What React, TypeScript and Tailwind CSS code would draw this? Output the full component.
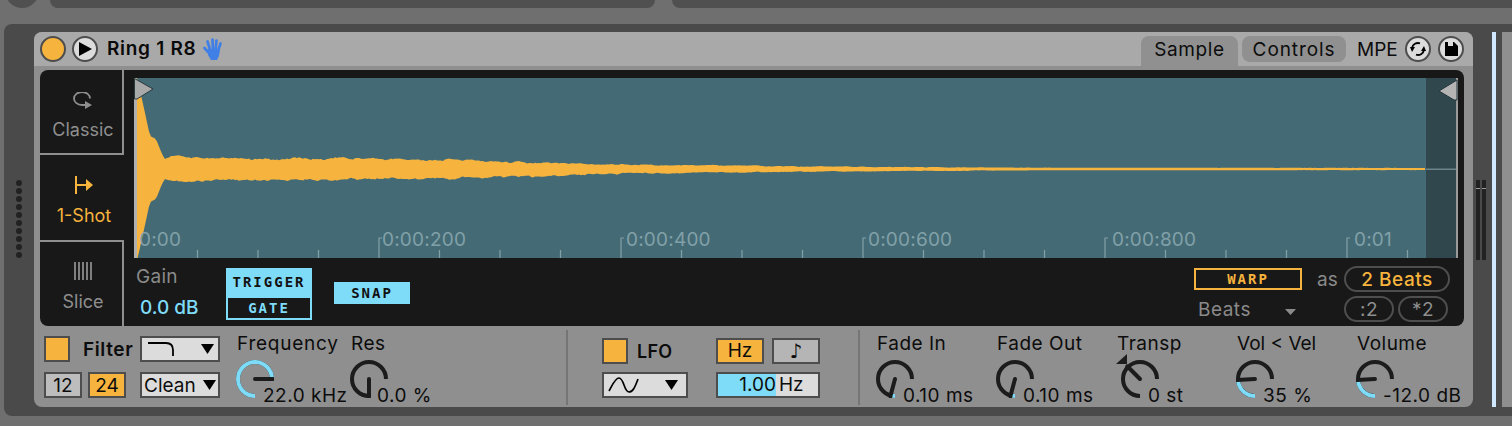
import type { ReactNode } from "react"

const FONT = "font-['Inter','Liberation_Sans',sans-serif]"
const PIXEL = "font-['DejaVu_Sans_Mono','Liberation_Mono',monospace]"

// waveform outline, seeded so it comes out the same every render
function noise(i: number) {
    const s = Math.sin(i * 12.9898) * 43758.5453
    return s - Math.floor(s)
}

// slow lumps plus a bit of fine grain, like the edge of a real decay
function lumps(x: number, seed: number) {
    const step = 7
    const k = Math.floor(x / step)
    const t = (x - k * step) / step
    const slow = noise(k + seed) * (1 - t) + noise(k + 1 + seed) * t
    return (slow - 0.5) * 1.6 + (noise(x + seed) - 0.5) * 0.7
}

function envelope(x: number) {
    const pts = [
        [3, 92], [7, 74], [11, 56], [16, 33], [22, 30], [28, 15], [31, 10], [36, 13],
        [60, 11], [120, 10.5], [300, 9.5], [400, 7], [470, 4.8], [560, 3.8], [670, 2.6], [760, 2], [900, 1.3], [1292, 1.1],
    ]
    for (let i = 0; i < pts.length - 1; i++) {
        if (x <= pts[i + 1][0]) {
            const t = (x - pts[i][0]) / (pts[i + 1][0] - pts[i][0])
            return pts[i][1] + (pts[i + 1][1] - pts[i][1]) * t
        }
    }
    return 1
}

function wavePath() {
    const top: string[] = []
    const bottom: string[] = []
    for (let x = 3; x <= 1292; x += 2) {
        const a = envelope(x)
        const n = x > 30 ? Math.min(1.8, a * 0.22) * (a > 1.5 ? 1 : 0.3) : 0
        const up = Math.min(91, a + lumps(x, 7) * n)
        const down = Math.min(91, a + lumps(x, 311) * n)
        top.push(`${x},${(91 - up).toFixed(1)}`)
        bottom.unshift(`${x},${(91 + down).toFixed(1)}`)
    }
    return `M${top.join(" L")} L${bottom.join(" L")} Z`
}

const WAVE = wavePath()
const TICKS = Array.from({ length: 22 }, (_, i) => i)
const LABELS = [
    { text: "0:00", className: "left-[5px]" },
    { text: "0:00:200", className: "left-[248px]" },
    { text: "0:00:400", className: "left-[492px]" },
    { text: "0:00:600", className: "left-[734px]" },
    { text: "0:00:800", className: "left-[978px]" },
    { text: "0:01", className: "left-[1220px]" },
]

function Waveform() {
    return (
        <div className="relative w-[1324px] h-[180px] bg-[#446b75] overflow-hidden">
            <svg width="1324" height="180" viewBox="0 0 1324 180" className="block">
                <rect x="1292" y="0" width="30" height="180" fill="#30474e" />
                <rect x="0" y="0" width="3" height="180" fill="#b0b0b0" />
                <rect x="1322" y="0" width="2" height="180" fill="#9a9a9a" />
                <path d={WAVE} fill="#f6b33d" />
                <rect x="1292" y="90.5" width="30" height="1.5" fill="#6f8489" />
                {TICKS.map((i) => {
                    const x = 3 + i * 60.5
                    const major = i % 4 === 0
                    if (i === 0) return null
                    return (
                        <path
                            key={i}
                            d={major ? `M${x + 3} 160 H${x} V180` : `M${x} 172 V180`}
                            fill="none"
                            stroke="#83a0a7"
                            strokeWidth="1.2"
                        />
                    )
                })}
                <polygon points="0.5,0.5 19,11 3,21 0.5,21" fill="#a9a9a9" stroke="#2b3a3f" strokeWidth="1" />
                <polygon points="1323,2 1305,13 1320,22 1323,22" fill="#b4b4b4" stroke="#22343a" strokeWidth="1" />
            </svg>
            {LABELS.map((l) => (
                <span key={l.text} className={`absolute top-[152px] text-[19px] leading-5 tracking-[0.2px] text-[#82a0a8] ${l.className}`}>
                    {l.text}
                </span>
            ))}
        </div>
    )
}

function ModeTab({ icon, label, active, className, labelClass }: { icon: ReactNode; label: string; active?: boolean; className: string; labelClass: string }) {
    return (
        <div className={`flex flex-col items-center pl-1 ${active ? "text-[#f6b33d]" : "text-[#8f8f8f]"} ${className}`}>
            {icon}
            <span className={`text-[18px] leading-5 ${labelClass}`}>{label}</span>
        </div>
    )
}

function Pill({ children, className }: { children: ReactNode; className: string }) {
    return (
        <div className={`h-[26px] rounded-[13px] border-2 border-[#4e4e4e] flex items-center justify-center text-[19px] tracking-[0.5px] pt-[2px] ${className}`}>
            {children}
        </div>
    )
}

function Toggle({ className = "" }: { className?: string }) {
    return <div className={`w-[26px] h-[26px] bg-[#f6b33d] border-2 border-[#4d4d4d] ${className}`} />
}

function Arrow() {
    return <svg width="13" height="10" viewBox="0 0 13 10" className="shrink-0"><polygon points="0,0 13,0 6.5,10" fill="#000" /></svg>
}

function polar(r: number, deg: number) {
    // 0 = straight down, going clockwise round the dial
    const a = ((deg + 90) * Math.PI) / 180
    return { x: 19 + r * Math.cos(a), y: 19 + r * Math.sin(a) }
}

function arc(from: number, to: number) {
    const a = polar(17, from)
    const b = polar(17, to)
    const large = to - from > 180 ? 1 : 0
    return `M${a.x.toFixed(2)} ${a.y.toFixed(2)} A17 17 0 ${large} 1 ${b.x.toFixed(2)} ${b.y.toFixed(2)}`
}

function Knob({ angle, cyan }: { angle: number; cyan?: boolean }) {
    const tip = polar(18, angle)
    const start = polar(0, angle)
    return (
        <svg width="38" height="38" viewBox="0 0 38 38" className="shrink-0 block">
            <path d={arc(0, 270)} fill="none" stroke="#1c1c1c" strokeWidth="4" />
            {cyan && angle > 0 && <path d={arc(0, angle)} fill="none" stroke="#7fdcf8" strokeWidth="4" />}
            <line x1={start.x} y1={start.y} x2={tip.x} y2={tip.y} stroke="#1c1c1c" strokeWidth="4" strokeLinecap="round" />
        </svg>
    )
}

function Param({ label, value, angle, cyan, className = "", knobClass = "", labelClass = "tracking-[0.5px]", marker }: {
    label: string; value: string; angle: number; cyan?: boolean; className?: string; knobClass?: string; labelClass?: string; marker?: boolean
}) {
    return (
        <div className={`relative shrink-0 ${className}`}>
            <div className={`pl-[1px] h-[20px] mt-[8px] text-[19px] leading-5 text-[#0c0c0c] whitespace-nowrap ${labelClass}`}>{label}</div>
            {marker && (
                <svg width="12" height="10" viewBox="0 0 12 10" className="absolute left-0 top-[28px]"><polygon points="0,10 11,0 11,10" fill="#1c1c1c" /></svg>
            )}
            <div className={`flex mt-[6px] ${knobClass}`}>
                <Knob angle={angle} cyan={cyan} />
                <span className="-ml-[11px] mt-[26px] text-[19px] leading-5 text-[#0c0c0c] whitespace-nowrap tracking-[0.5px]">{value}</span>
            </div>
        </div>
    )
}

function RoundIcon({ children }: { children: ReactNode }) {
    return (
        <div className="w-[26px] h-[26px] rounded-full border-2 border-[#4d4d4d] bg-[#dcdcdc] flex items-center justify-center">
            {children}
        </div>
    )
}

export default function App() {
    return (
        <div className={`w-[1512px] h-[426px] overflow-hidden bg-[#6f6f6f] flex flex-col ${FONT}`}>
            {/* neighbouring panels, cut off by the top edge */}
            <div className="h-2 flex shrink-0 overflow-hidden">
                <div className="w-[50px] flex">
                    <div className="ml-[5px] w-[34px] h-[34px] -mt-[26px] rounded-full bg-[#505050]" />
                </div>
                <div className="w-[605px] bg-[#505050] rounded-b-lg" />
                <div className="ml-[17px] flex-1 bg-[#505050] rounded-bl-lg" />
            </div>

            <div className="mt-4 h-[392px] ml-1 flex bg-[#4a4a4a] rounded-l-lg pt-2 pb-[9px]">
                {/* grip */}
                <div className="w-[30px] shrink-0 flex flex-col items-center justify-center gap-[2px] pb-[2px]">
                    {Array.from({ length: 10 }, (_, i) => (
                        <div key={i} className="w-[6px] h-[6px] rounded-full bg-[#222222]" />
                    ))}
                </div>

                {/* device */}
                <div className="w-[1439px] shrink-0 flex flex-col bg-[#8f8f8f] rounded-lg overflow-hidden">
                    <div className="h-[34px] shrink-0 bg-[#a9a9a9] flex items-center pl-[6px] pr-[9px]">
                        <div className="w-[26px] h-[26px] rounded-full bg-[#f6b33d] border-2 border-[#4d4d4d]" />
                        <div className="ml-[6px] w-[26px] h-[26px] rounded-full bg-[#dcdcdc] border-2 border-[#4d4d4d] flex items-center justify-center">
                            <svg width="14" height="14" viewBox="0 0 14 14"><polygon points="1,0 14,7 1,14" fill="#000" /></svg>
                        </div>
                        <span className="ml-[9px] w-[89px] whitespace-nowrap text-[19px] font-semibold text-[#0a0a0a] tracking-[0.7px]">Ring 1 R8</span>
                        <svg width="20" height="23" viewBox="0 0 20 23" className="ml-[7px]">
                            <g stroke="#3f7fe6" strokeWidth="2.7" strokeLinecap="round" fill="none">
                                <path d="M7.5 13 L4.5 3.5" />
                                <path d="M10 12 L9.5 1.5" />
                                <path d="M12.5 12 L13.5 2.5" />
                                <path d="M15 13 L17.5 5.5" />
                                <path d="M6 15 L1.5 10" />
                            </g>
                            <path d="M5 11 H17 L16 18 L14 22 H8 L5 17 Z" fill="#3f7fe6" />
                        </svg>
                        <div className="ml-auto self-end w-[97px] h-[30px] bg-[#909090] rounded-t-lg flex items-center justify-center text-[19px] text-[#0c0c0c] tracking-[0.6px] pb-[2px]">Sample</div>
                        <div className="ml-[4px] self-end mb-1 w-[104px] h-[26px] bg-[#909090] rounded-lg flex items-center justify-center text-[19px] text-[#0c0c0c] tracking-[0.9px] pt-[2px]">Controls</div>
                        <span className="ml-[11px] w-[41px] text-[19px] text-[#0c0c0c] pt-[2px]">MPE</span>
                        <div className="ml-[7px]">
                            <RoundIcon>
                                <svg width="16" height="16" viewBox="0 0 16 16" fill="none">
                                    <path d="M2 7 A6 6 0 0 1 10 2.4" stroke="#000" strokeWidth="1.8" />
                                    <path d="M14 9 A6 6 0 0 1 6 13.6" stroke="#000" strokeWidth="1.8" />
                                    <polygon points="0,6 5,6 2,11" fill="#000" />
                                    <polygon points="11,10 16,10 14,5" fill="#000" />
                                </svg>
                            </RoundIcon>
                        </div>
                        <div className="ml-[7px]">
                            <RoundIcon>
                                <svg width="14" height="14" viewBox="0 0 14 14"><path d="M1 0 H10 L14 4 V14 H1 Z M4 0 V4 H9 V0 Z" fill="#000" fillRule="evenodd" /></svg>
                            </RoundIcon>
                        </div>
                    </div>

                    {/* sample panel */}
                    <div className="ml-[6px] mt-1 w-[1424px] h-[256px] shrink-0 bg-[#181818] rounded-lg flex">
                        <div className="w-[84px] shrink-0 flex flex-col">
                            <ModeTab
                                className="h-[85px] border-r-2 border-b-2 border-[#8f8f8f] pt-[22px]"
                                labelClass="mt-[11px]"
                                label="Classic"
                                icon={
                                    <svg width="20" height="17" viewBox="0 0 20 17" fill="none">
                                        <path d="M17 6.5 A8 6.5 0 1 0 9 13 H13" stroke="#8f8f8f" strokeWidth="1.8" />
                                        <polygon points="12,9 19,13 12,17" fill="#8f8f8f" />
                                    </svg>
                                }
                            />
                            <ModeTab
                                className="h-[85px] pt-[21px]"
                                labelClass="mt-3"
                                label="1-Shot"
                                active
                                icon={
                                    <svg width="20" height="18" viewBox="0 0 20 18" fill="none">
                                        <path d="M2 0 V18 M2 9 H14" stroke="#f6b33d" strokeWidth="2" />
                                        <polygon points="12,3 19,9 12,15" fill="#f6b33d" />
                                    </svg>
                                }
                            />
                            <ModeTab
                                className="h-[86px] border-r-2 border-t-2 border-[#8f8f8f] pt-[20px]"
                                labelClass="mt-3"
                                label="Slice"
                                icon={
                                    <svg width="18" height="18" viewBox="0 0 18 18">
                                        <path d="M1 0 V18 M5 0 V18 M9 0 V18 M13 0 V18 M17 0 V18" stroke="#9a9a9a" strokeWidth="1.6" />
                                    </svg>
                                }
                            />
                        </div>
                        <div className="flex-1 flex flex-col pl-[10px]">
                            <div className="mt-2">
                                <Waveform />
                            </div>
                            <div className="flex-1 flex">
                                <div className="ml-[2px] w-[64px] flex flex-col">
                                    <span className="mt-[9px] text-[19px] leading-5 text-[#8a8a8a] tracking-[0.3px]">Gain</span>
                                    <span className="mt-[11px] ml-1 text-[19px] leading-5 text-[#7fdcf8] font-medium whitespace-nowrap">0.0 dB</span>
                                </div>
                                <div className={`ml-[26px] mt-[10px] w-[86px] h-[52px] flex flex-col font-bold text-[14px] tracking-[2px] ${PIXEL}`}>
                                    <div className="h-[28px] bg-[#7fdcf8] text-[#111] flex items-center justify-center">TRIGGER</div>
                                    <div className="h-[24px] border-2 border-[#7fdcf8] text-[#7fdcf8] flex items-center justify-center">GATE</div>
                                </div>
                                <div className={`ml-[22px] mt-6 w-[76px] h-[22px] bg-[#7fdcf8] text-[#111] text-[14px] font-bold tracking-[2px] flex items-center justify-center ${PIXEL}`}>SNAP</div>
                                <div className="ml-auto flex mr-[14px]">
                                    <div className="flex flex-col w-[108px]">
                                        <div className={`mt-[10px] h-[22px] border-2 border-[#f6b33d] text-[#f6b33d] text-[14px] font-bold tracking-[2px] flex items-center justify-center ${PIXEL}`}>WARP</div>
                                        <div className="mt-[10px] flex items-center pl-1 pr-[6px]">
                                            <span className="text-[19px] leading-5 text-[#8a8a8a] tracking-[0.5px]">Beats</span>
                                            <svg width="11" height="6" viewBox="0 0 11 6" className="ml-auto mt-1"><polygon points="0,0 11,0 5.5,6" fill="#8a8a8a" /></svg>
                                        </div>
                                    </div>
                                    <span className="ml-[15px] w-[27px] mt-[12px] text-[19px] leading-5 text-[#8a8a8a]">as</span>
                                    <div className="flex flex-col">
                                        <Pill className="mt-2 w-[106px] text-[#f6b33d] font-medium">2 Beats</Pill>
                                        <div className="mt-1 flex gap-1">
                                            <Pill className="w-[50px] text-[#8f8f8f]">:2</Pill>
                                            <Pill className="w-[50px] text-[#8f8f8f]">*2</Pill>
                                        </div>
                                    </div>
                                </div>
                            </div>
                        </div>
                    </div>

                    {/* bottom controls */}
                    <div className="flex-1 flex text-[#0c0c0c]">
                        <div className="w-[532px] shrink-0 flex">
                            <div className="ml-[10px] w-[192px] shrink-0 flex flex-col gap-[10px] pt-[10px]">
                                <div className="flex items-center h-[26px]">
                                    <Toggle />
                                    <span className="ml-[13px] text-[19px] font-semibold w-[57px] tracking-[0.6px] pt-[2px]">Filter</span>
                                    <div className="w-[80px] h-[26px] bg-[#dcdcdc] border-2 border-[#4d4d4d] flex items-center justify-between pl-[4px] pr-[4px]">
                                        <svg width="30" height="16" viewBox="0 0 30 16" fill="none"><path d="M2 2 H20 Q27 2 27 9 V15" stroke="#000" strokeWidth="1.8" /></svg>
                                        <Arrow />
                                    </div>
                                </div>
                                <div className="flex items-center h-[26px]">
                                    <div className="w-[38px] h-[26px] bg-[#bdbdbd] border-2 border-[#4d4d4d] flex items-center justify-center text-[19px] pt-[2px]">12</div>
                                    <div className="ml-[6px] w-[38px] h-[26px] bg-[#f6b33d] border-2 border-[#4d4d4d] flex items-center justify-center text-[19px] pt-[2px]">24</div>
                                    <div className="ml-[14px] w-[80px] h-[26px] bg-[#dcdcdc] border-2 border-[#4d4d4d] flex items-center justify-between pl-[2px] pr-[2px] text-[19px]">
                                        <span className="pt-[2px]">Clean</span>
                                        <Arrow />
                                    </div>
                                </div>
                            </div>
                            <Param className="w-[114px]" label="Frequency" labelClass="tracking-[0.75px]" value="22.0 kHz" angle={270} cyan />
                            <Param className="w-[100px]" label="Res" value="0.0 %" angle={0} />
                        </div>
                        <div className="w-[2px] shrink-0 mt-[4px] mb-[2px] bg-[#757575]" />
                        <div className="w-[290px] shrink-0 pl-[34px] pt-[12px] flex flex-col gap-2">
                            <div className="flex items-center h-[26px]">
                                <Toggle />
                                <span className="ml-[9px] w-[79px] text-[18px] font-semibold tracking-[0.3px]">LFO</span>
                                <div className="w-[48px] h-[26px] bg-[#f6b33d] border-2 border-[#4d4d4d] flex items-center justify-center text-[19px]">Hz</div>
                                <div className="ml-2 w-[48px] h-[26px] bg-[#b5b5b5] border-2 border-[#4d4d4d] flex items-center justify-center text-[20px] font-['DejaVu_Sans',sans-serif]">♪</div>
                            </div>
                            <div className="flex items-center h-[26px]">
                                <div className="w-[86px] h-[26px] bg-[#dcdcdc] border-2 border-[#4d4d4d] flex items-center justify-between pl-[4px] pr-[8px]">
                                    <svg width="32" height="18" viewBox="0 0 32 18" fill="none"><path d="M1 15 C4 10 7 2 11 2 C16 2 16 16 21 16 C25 16 27 11 30 3" stroke="#000" strokeWidth="1.7" /></svg>
                                    <Arrow />
                                </div>
                                <div className="ml-[28px] w-[104px] h-[26px] bg-[#dcdcdc] border-2 border-[#4d4d4d] flex text-[19px]">
                                    <div className="w-[58px] bg-[#7fdcf8] flex items-center justify-end">1.00</div>
                                    <div className="pl-[3px] flex items-center">Hz</div>
                                </div>
                            </div>
                        </div>
                        <div className="w-[2px] shrink-0 mt-[4px] mb-[2px] bg-[#757575]" />
                        <div className="pl-[16px] flex">
                            <Param className="w-[120px]" label="Fade In" value="0.10 ms" angle={15} cyan />
                            <Param className="w-[120px]" label="Fade Out" value="0.10 ms" angle={15} cyan />
                            <Param className="w-[120px]" label="Transp" value="0 st" angle={135} knobClass="ml-[5px]" marker />
                            <Param className="w-[120px]" label="Vol < Vel" labelClass="tracking-[0px]" value="35 %" angle={87} cyan />
                            <Param className="w-[110px]" label="Volume" value="-12.0 dB" angle={87} cyan />
                        </div>
                    </div>
                </div>

                {/* track meter */}
                <div className="w-[19px] shrink-0 flex gap-[2px] pl-[3px] pt-[148px]">
                    <div className="relative w-1 h-[80px] bg-[#222222]"><div className="absolute top-2 inset-x-0 h-[1px] bg-[#9a9a9a]" /></div>
                    <div className="relative w-1 h-[80px] bg-[#222222]"><div className="absolute top-2 inset-x-0 h-[1px] bg-[#9a9a9a]" /></div>
                </div>

                <div className="w-1 shrink-0 bg-[#cfe8ff]" />
                <div className="w-[6px] shrink-0" />
                <div className="flex-1 bg-[#8f8f8f]" />
            </div>
        </div>
    )
}
